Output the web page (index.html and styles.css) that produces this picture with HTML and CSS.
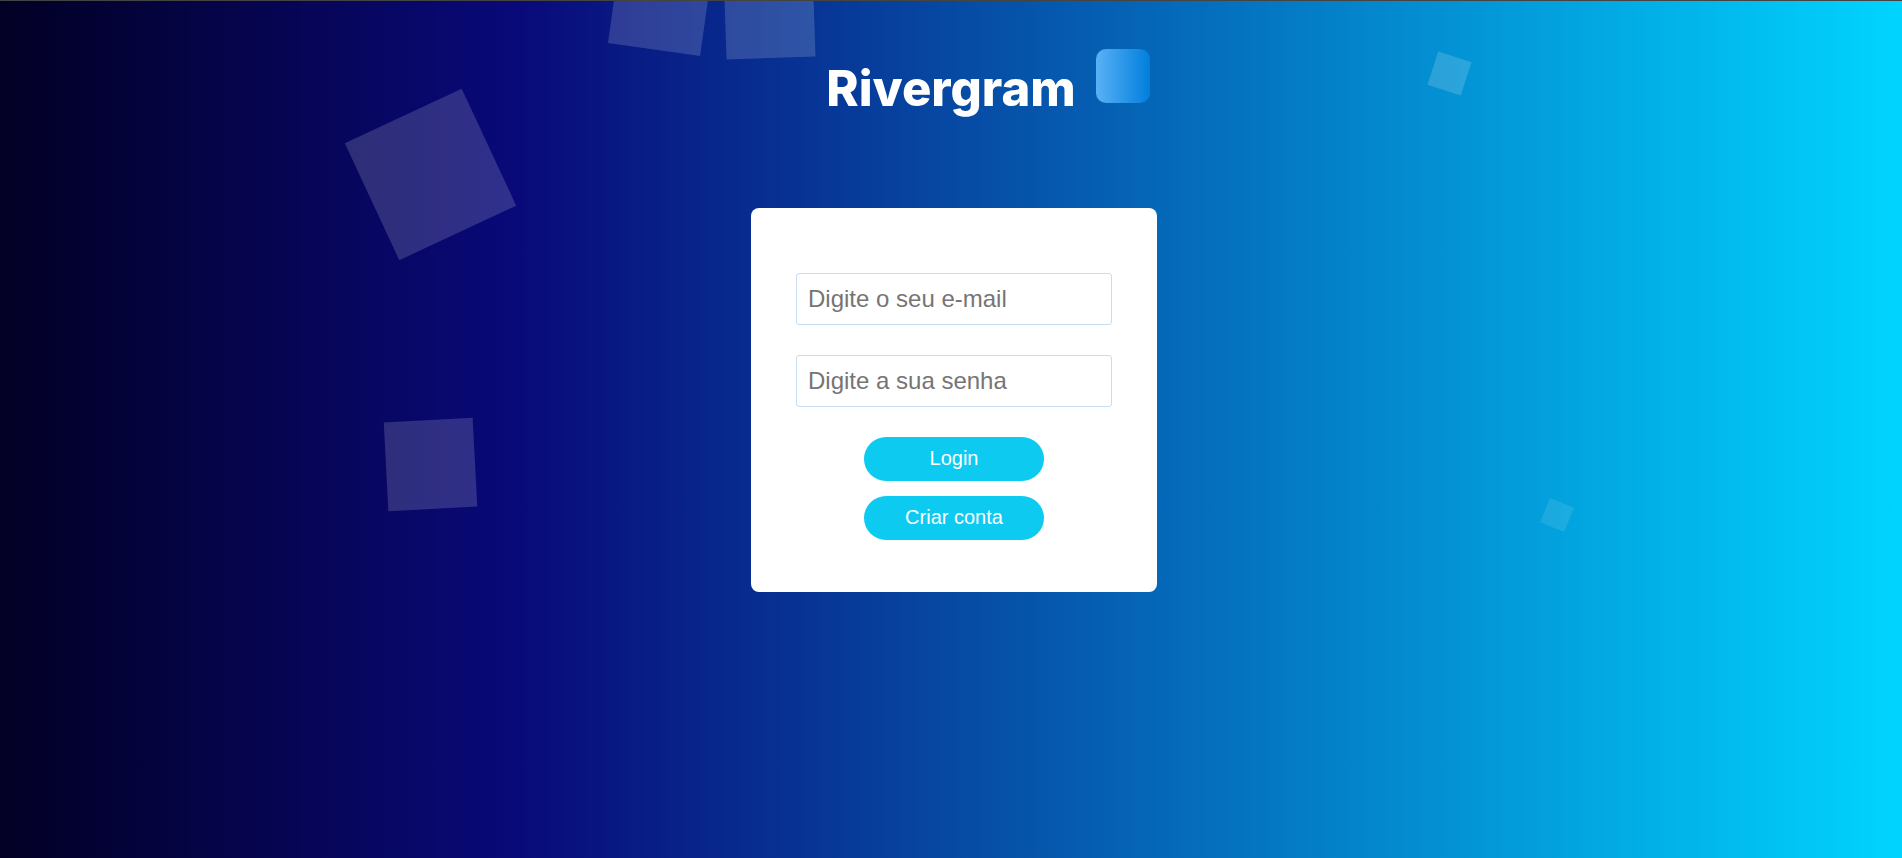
FILE: index.html
```html
<!DOCTYPE html>
<html lang="pt-BR">
<head>
<meta charset="utf-8">
<title>Rivergram</title>
<meta name="viewport" content="width=device-width, initial-scale=1">
<link rel="stylesheet" href="styles.css">
</head>
<body class="page">
<div class="squares" aria-hidden="true">
  <span class="square square-a"></span>
  <span class="square square-b"></span>
  <span class="square square-c"></span>
  <span class="square square-d"></span>
  <span class="square square-e"></span>
  <span class="square square-f"></span>
</div>
<header class="header">
  <h1 class="title">Rivergram</h1>
  <span class="mark"></span>
</header>
<main class="main">
  <form class="card">
    <input class="field" type="email" placeholder="Digite o seu e-mail" aria-label="Digite o seu e-mail">
    <input class="field" type="password" placeholder="Digite a sua senha" aria-label="Digite a sua senha">
    <div class="actions">
      <button class="button" type="submit">Login</button>
      <button class="button" type="button">Criar conta</button>
    </div>
  </form>
</main>
</body>
</html>
```
FILE: styles.css
```css
* {
  box-sizing: border-box;
}

.page {
  position: relative;
  margin: 0;
  min-height: 100vh;
  overflow: hidden;
  border-top: 1px solid #444;
  font-family: "Liberation Sans", Arial, sans-serif;
  background: linear-gradient(90deg, #020024 0%, #090979 27%, #00d4ff 100%);
}

/* Floating decoration behind the content */
.squares {
  position: absolute;
  inset: 0;
  overflow: hidden;
}

.square {
  position: absolute;
  background: rgba(255, 255, 255, 0.16);
}

.square-a {
  left: 366px;
  top: 109px;
  width: 129px;
  height: 129px;
  transform: rotate(-25deg);
}

.square-b {
  left: 386px;
  top: 419px;
  width: 89px;
  height: 89px;
  transform: rotate(-3deg);
}

.square-c {
  left: 614px;
  top: -44px;
  width: 93px;
  height: 93px;
  transform: rotate(8deg);
}

.square-d {
  left: 725px;
  top: -32px;
  width: 89px;
  height: 89px;
  transform: rotate(-2deg);
}

.square-e {
  left: 1432px;
  top: 55px;
  width: 35px;
  height: 35px;
  transform: rotate(18deg);
}

.square-f {
  left: 1544px;
  top: 501px;
  width: 26px;
  height: 26px;
  transform: rotate(22deg);
  background: rgba(255, 255, 255, 0.1);
}

.header {
  position: relative;
  display: grid;
  grid-template-columns: 1fr auto 1fr;
  column-gap: 20px;
  align-items: start;
  padding-top: 48px;
}

.title {
  grid-column: 2;
  margin: 12px 0 0;
  font-family: Inter, sans-serif;
  font-size: 49px;
  font-weight: 800;
  line-height: 56px;
  color: #fff;
}

.mark {
  width: 54px;
  height: 54px;
  border-radius: 10px;
  background: linear-gradient(90deg, #5ab1f6, #007fdc);
}

.main {
  position: relative;
  display: flex;
  justify-content: center;
  padding: 91px 0 40px 6px;
}

.card {
  display: flex;
  flex-direction: column;
  gap: 30px;
  width: 100%;
  max-width: 406px;
  padding: 65px 45px 52px;
  border-radius: 8px;
  background: #fff;
}

.field {
  width: 100%;
  height: 52px;
  padding: 0 11px;
  border: 1px solid #c9ddf0;
  border-radius: 3px;
  font-family: inherit;
  font-size: 24px;
  color: #333;
  background: #fff;
}

.field::placeholder {
  color: #757575;
}

.actions {
  display: flex;
  flex-direction: column;
  align-items: center;
  gap: 15px;
}

.button {
  width: 180px;
  height: 44px;
  padding: 0 0 2px;
  border: 0;
  border-radius: 22px;
  font-family: inherit;
  font-size: 20px;
  color: #fff;
  background: #0dcaf0;
  cursor: pointer;
}
```
